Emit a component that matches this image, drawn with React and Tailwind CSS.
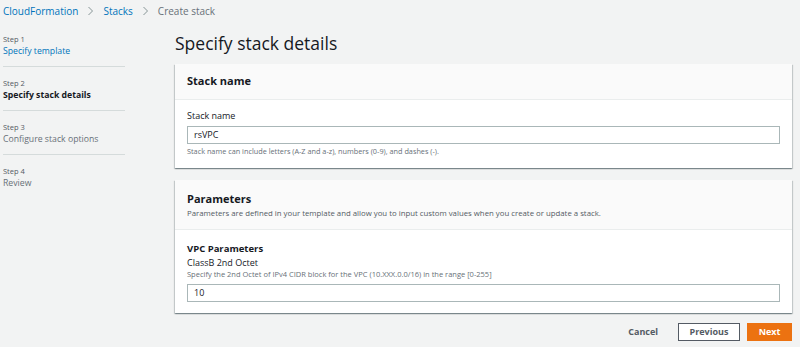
const font = { fontFamily: '"Open Sans", "Noto Sans", Arial, sans-serif' };

const steps = [
  { n: 1, label: 'Specify template', state: 'done' },
  { n: 2, label: 'Specify stack details', state: 'current' },
  { n: 3, label: 'Configure stack options', state: 'todo' },
  { n: 4, label: 'Review', state: 'todo' },
];

function Chevron() {
  return (
    <svg width="7" height="10" viewBox="0 0 7 10" className="mx-[9px]">
      <path d="M1.5 1 L5.5 5 L1.5 9" fill="none" stroke="#879596" strokeWidth="1" />
    </svg>
  );
}

function Card({ children }) {
  return (
    <div className="bg-white shadow-[0_1px_1px_0_rgba(0,28,36,0.3),1px_1px_1px_0_rgba(0,28,36,0.15),-1px_1px_1px_0_rgba(0,28,36,0.15)]">
      {children}
    </div>
  );
}

export default function App() {
  return (
    <div style={font} className="min-h-[347px] w-[800px] bg-[#f2f3f3] text-[#16191f]">
      <nav className="flex h-[22px] items-center pl-[3px] text-[10px]">
        <span className="text-[#0073bb]">CloudFormation</span>
        <Chevron />
        <span className="text-[#0073bb]">Stacks</span>
        <Chevron />
        <span className="text-[#687078]">Create stack</span>
      </nav>

      <div className="flex">
        <ol className="ml-[3px] w-[122px] pt-[1px]">
          {steps.map((s, i) => (
            <li
              key={s.n}
              className={`h-[44px] pt-[10px] ${i < steps.length - 1 ? 'border-b border-[#d5dbdb]' : ''}`}
            >
              <div className="text-[7.5px] leading-[12px] text-[#545b64]">Step {s.n}</div>
              <div
                className={`text-[8.7px] leading-[12px] ${
                  s.state === 'done'
                    ? 'text-[#0073bb]'
                    : s.state === 'current'
                    ? 'text-[8.3px] font-bold text-[#16191f]'
                    : 'text-[#687078]'
                }`}
              >
                {s.label}
              </div>
            </li>
          ))}
        </ol>

        <main className="ml-[50px] mr-[8px] flex-1 pt-[9px]">
          <h1 className="mb-[9px] text-[17.5px] leading-[24px]">Specify stack details</h1>

          <Card>
            <div className="flex h-[36px] items-center border-b border-[#eaeded] bg-[#fafafa] px-3">
              <h2 className="text-[11px] font-bold">Stack name</h2>
            </div>
            <div className="px-3 pb-[12px] pt-[10px]">
              <label className="block text-[9px] leading-[12px]">Stack name</label>
              <div className="mt-[4px] flex h-[18px] items-center border border-[#aab7b8] px-[6px] text-[9px]">
                rsVPC
              </div>
              <p className="mt-[2px] text-[7.3px] leading-[10px] text-[#687078]">
                Stack name can include letters (A-Z and a-z), numbers (0-9), and dashes (-).
              </p>
            </div>
          </Card>

          <div className="mt-[12px]">
            <Card>
              <div className="border-b border-[#eaeded] bg-[#fafafa] px-3 pb-[10px] pt-[11px]">
                <h2 className="text-[11px] font-bold leading-[16px]">Parameters</h2>
                <p className="text-[7.8px] leading-[12px] text-[#545b64]">
                  Parameters are defined in your template and allow you to input custom values when you create or update a stack.
                </p>
              </div>
              <div className="px-3 pb-[11px] pt-[12px]">
                <h3 className="text-[9.5px] font-bold leading-[14px]">VPC Parameters</h3>
                <div className="mt-[1px] text-[9px] leading-[12px]">ClassB 2nd Octet</div>
                <p className="text-[7.5px] leading-[10px] text-[#687078]">
                  Specify the 2nd Octet of IPv4 CIDR block for the VPC (10.XXX.0.0/16) in the range [0-255]
                </p>
                <div className="mt-[5px] flex h-[18px] items-center border border-[#aab7b8] px-[6px] text-[9px]">
                  10
                </div>
              </div>
            </Card>
          </div>

          <div className="mt-[10px] flex items-center justify-end">
            <button className="mr-[20px] text-[9px] font-bold text-[#545b64]">Cancel</button>
            <button className="mr-[7px] h-[18px] w-[62px] border border-[#545b64] bg-white text-[9px] font-bold text-[#545b64]">
              Previous
            </button>
            <button className="h-[18px] w-[45px] border border-[#ec7211] bg-[#ec7211] text-[9px] font-bold text-white">
              Next
            </button>
          </div>
        </main>
      </div>
    </div>
  );
}
